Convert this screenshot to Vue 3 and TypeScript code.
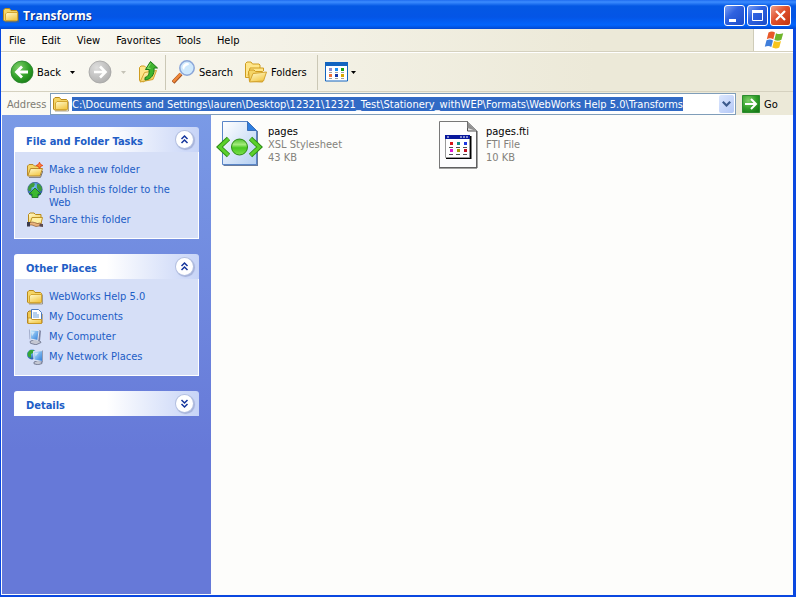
<script setup lang="ts">
import { ref } from 'vue'

interface TaskLink {
  label: string
  icon: string
}

interface FileEntry {
  name: string
  type: string
  size: string
  icon: string
}

const title = 'Transforms'
const menus: string[] = ['File', 'Edit', 'View', 'Favorites', 'Tools', 'Help']
const address = ref(
  'C:\\Documents and Settings\\lauren\\Desktop\\12321\\12321_Test\\Stationery_withWEP\\Formats\\WebWorks Help 5.0\\Transforms',
)

const panels = ref<{ title: string; open: boolean; links: TaskLink[] }[]>([
  {
    title: 'File and Folder Tasks',
    open: true,
    links: [
      { label: 'Make a new folder', icon: 'new-folder' },
      { label: 'Publish this folder to the Web', icon: 'publish' },
      { label: 'Share this folder', icon: 'share' },
    ],
  },
  {
    title: 'Other Places',
    open: true,
    links: [
      { label: 'WebWorks Help 5.0', icon: 'folder' },
      { label: 'My Documents', icon: 'documents' },
      { label: 'My Computer', icon: 'computer' },
      { label: 'My Network Places', icon: 'network' },
    ],
  },
  { title: 'Details', open: false, links: [] },
])

const files: FileEntry[] = [
  { name: 'pages', type: 'XSL Stylesheet', size: '43 KB', icon: 'xsl' },
  { name: 'pages.fti', type: 'FTI File', size: '10 KB', icon: 'fti' },
]
</script>

<template>
  <svg class="sprite" aria-hidden="true">
    <defs>
      <linearGradient id="gold" x1="0" y1="0" x2="0.6" y2="1">
        <stop offset="0" stop-color="#fffbd0" />
        <stop offset="1" stop-color="#f3c94b" />
      </linearGradient>
      <linearGradient id="page" x1="0" y1="0" x2="1" y2="1">
        <stop offset="0" stop-color="#ffffff" />
        <stop offset="1" stop-color="#b4cff2" />
      </linearGradient>
      <radialGradient id="green" cx="0.35" cy="0.3" r="0.8">
        <stop offset="0" stop-color="#7fd06a" />
        <stop offset="0.6" stop-color="#2f9e28" />
        <stop offset="1" stop-color="#187a16" />
      </radialGradient>
      <radialGradient id="grey" cx="0.35" cy="0.3" r="0.8">
        <stop offset="0" stop-color="#dcdcdc" />
        <stop offset="1" stop-color="#a4a4a4" />
      </radialGradient>
      <radialGradient id="globe" cx="0.4" cy="0.3" r="0.8">
        <stop offset="0" stop-color="#7ac6f8" />
        <stop offset="1" stop-color="#164a9c" />
      </radialGradient>
      <linearGradient id="screen" x1="0" y1="0" x2="1" y2="1">
        <stop offset="0" stop-color="#c4ecff" />
        <stop offset="1" stop-color="#2878d8" />
      </linearGradient>
      <linearGradient id="orb" x1="0" y1="0" x2="0" y2="1">
        <stop offset="0" stop-color="#4cc02c" />
        <stop offset="0.35" stop-color="#a4ec7c" />
        <stop offset="0.55" stop-color="#48c820" />
        <stop offset="1" stop-color="#7ce04c" />
      </linearGradient>
    </defs>
    <symbol id="icon-folder" viewBox="0 0 16 16">
      <path d="M2 15h13.500V5.500" fill="none" stroke="#7a6a48" stroke-width="1" opacity=".6" />
      <path d="M.5 13V3L2 1.500h4.500L8 3.500h5.500l1 1V13l-1 1h-12z" fill="#f5d566" stroke="#b98a1a" />
      <path d="M2.500 13.500V7L4 5.500h10.500V13l-.8.5z" fill="url(#gold)" stroke="#d4a630" />
    </symbol>
    <symbol id="icon-new-folder" viewBox="0 0 16 16">
      <path d="M2 15.300h11.500L15.800 9" fill="none" stroke="#4c4032" opacity=".7" />
      <path d="M.5 13.500V4L2 2.500h4L7.500 4H13v3" fill="#f5d566" stroke="#b98a2a" />
      <path d="M.8 14L3.500 6.500h12L13 14z" fill="url(#gold)" stroke="#b98a2a" />
      <path d="M12.500 .2l.9 2.200 2.400 1.100-2.400 1-.9 2.200-1-2.200-2.300-1 2.300-1.100z" fill="#ff8a30" stroke="#e8481c" stroke-width="1" />
    </symbol>
    <symbol id="icon-publish" viewBox="0 0 16 16">
      <circle cx="8" cy="7.500" r="7.200" fill="url(#globe)" stroke="#1b3f78" stroke-width=".6" />
      <path d="M1 6l2-3.500L6 .8l2 1-1 3-2.500 1L4 9 1.500 9zM10 2l3 .5L15 6l-.5 3-2 .5L10 6z" fill="#3f9c3c" />
      <path d="M8 6l6 6h-3v3.500H5V12H2z" fill="#3cb830" stroke="#146c20" stroke-width=".8" />
    </symbol>
    <symbol id="icon-share" viewBox="0 0 16 16">
      <path d="M1.500 12V2.500L3 1h4l1.500 1.500H14V12z" fill="url(#gold)" stroke="#b98a1a" />
      <path d="M3 11.500l2-6h10.500l-1.500 6z" fill="#fff1a4" stroke="#c09428" />
      <path d="M2 11l3-1 2.500.5 3 1 2.500-.5 2 1.500-3 1.500-3 .5-4-1.500H2z" fill="#e8b27c" stroke="#8a5c34" stroke-width=".7" />
      <path d="M0 10h3v4.500H0z" fill="#3a3a4c" />
      <path d="M12.500 12H16v3l-3.500-.5z" fill="#5c4a50" />
    </symbol>
    <symbol id="icon-documents" viewBox="0 0 16 16">
      <path d="M.5 14V3.500L2 2h4l1 2h7l1 1v9z" fill="#f0c850" stroke="#a87a20" />
      <path d="M4.500 11V.5h7l3 3V11z" fill="#fff" stroke="#4b79bd" />
      <path d="M6 4h4M6 6h6M6 8h6" stroke="#6aa0dc" />
      <path d="M1 14.500V9h3l1 1.500h9.500v4z" fill="url(#gold)" stroke="#c89828" />
    </symbol>
    <symbol id="icon-computer" viewBox="0 0 16 16">
      <path d="M3 12.500l4-2 6 1.500 1 1.500-5 2.300-5.500-1.500z" fill="#c4c7d2" stroke="#666d88" stroke-width=".8" />
      <path d="M11 .8l3 1-1 10-4-1z" fill="#7c82a0" />
      <path d="M3 .8l9 .7-1.200 10L3.500 10z" fill="url(#screen)" stroke="#e4e8f2" stroke-width="1" />
      <path d="M2.400 .5l.5 9.800" stroke="#8c98bc" stroke-width=".7" />
      <path d="M4 2.500l4 .3-3 4.500z" fill="#fff" opacity=".5" />
    </symbol>
    <symbol id="icon-network" viewBox="0 0 16 16">
      <circle cx="5" cy="5.500" r="5" fill="url(#globe)" />
      <path d="M.5 4L3 1l4 0-1 3-2 1v4L1 7.500z" fill="#37a834" />
      <path d="M7 13l4-1.500 4 1.500v1.500l-4 1.300-4-1z" fill="#c4c7d2" stroke="#666d88" stroke-width=".8" />
      <path d="M6.500 2.500l9-.9v10.900l-8.500-1.500z" fill="url(#screen)" stroke="#dfe5f2" />
      <path d="M8 4l4-.5-3.500 4z" fill="#fff" opacity=".5" />
      <path d="M15.700 1.500v11l-2 .5" fill="none" stroke="#596184" stroke-width=".7" />
    </symbol>
    <symbol id="icon-xsl" viewBox="0 0 48 50">
      <path d="M8.500 4v43h34.500V12" fill="#35507e" opacity=".75" />
      <path d="M7.500 2.500h25l9 9v34h-34z" fill="url(#page)" stroke="#5a86c8" />
      <path d="M32.500 2.500v9h9z" fill="#2f7fe0" stroke="#3b6fb8" />
      <path d="M13.500 19.500L4.500 28l9 8.500M35.500 19.500l9 8.500-9 8.500" fill="none" stroke="#2c8c14" stroke-width="4.800" />
      <path d="M13.300 19.800L4.700 28l8.600 8.200M35.700 19.800l8.600 8.200-8.600 8.200" fill="none" stroke="#5cd02c" stroke-width="3" />
      <circle cx="24.500" cy="28" r="8" fill="url(#orb)" stroke="#2c8c14" />
    </symbol>
    <symbol id="icon-fti" viewBox="0 0 48 50">
      <path d="M6.500 2.500h28l9 9v37h-37z" fill="#fdfdfd" stroke="#787878" />
      <path d="M44 12v37H6" fill="none" stroke="#484848" />
      <path d="M34.500 2.500v9.500h9" fill="#e4e4e4" stroke="#505050" />
      <path d="M34.500 3l9 9-9-3z" fill="#909090" />
      <path d="M13 39h24.500V17" fill="none" stroke="#000" stroke-width="2" />
      <path d="M12.500 16.500h24v22h-24z" fill="#fff" stroke="#9a9a9a" />
      <path d="M12 16h25v4H12z" fill="#08189c" />
      <path d="M14 18h2M27 18h2M30 18h2M33 18h2" stroke="#fff" />
      <path d="M17 23h3v3h-3z" fill="#d81818" /><path d="M24 23h3v3h-3z" fill="#109088" /><path d="M31 23h3v3h-3z" fill="#2038e0" />
      <path d="M17 30h3v3h-3z" fill="#e018d0" /><path d="M24 30h3v3h-3z" fill="#a8a000" /><path d="M31 30h3v3h-3z" fill="#c01020" />
      <path d="M16 28.500h4M23 28.500h4M30 28.500h4M16 35.500h4M23 35.500h4M30 35.500h4" stroke="#505050" />
    </symbol>
  </svg>

  <div class="window">
    <header class="titlebar">
      <svg class="icon16"><use href="#icon-folder" /></svg>
      <h1>{{ title }}</h1>
      <div class="caption-buttons">
        <button type="button" aria-label="Minimize">
          <svg viewBox="0 0 19 19"><path d="M4 13h7v3H4z" fill="#fff" /></svg>
        </button>
        <button type="button" aria-label="Maximize">
          <svg viewBox="0 0 19 19">
            <path d="M4.500 4.500h10v10h-10z" fill="none" stroke="#fff" /><path d="M4 4h11v3H4z" fill="#fff" />
          </svg>
        </button>
        <button type="button" aria-label="Close" class="close">
          <svg viewBox="0 0 19 19"><path d="M5 5l9 9M14 5l-9 9" stroke="#fff" stroke-width="2.200" /></svg>
        </button>
      </div>
    </header>

    <div class="menubar">
      <nav>
        <button v-for="menu in menus" :key="menu" type="button">{{ menu }}</button>
      </nav>
      <div class="brand">
        <svg viewBox="0 0 20 18" role="img" aria-label="Windows">
          <path d="M4.500 1.500C7 .2 9 .3 11 1.600L9.300 8.300C7.300 7 5 7 2.800 8.200z" fill="#e8592a" />
          <path d="M12 2.200c2.400 1.200 4.700 1 7.200 0l-1.800 6.600c-2.300 1.200-4.700 1.200-7 .1z" fill="#6fb52c" />
          <path d="M2.500 9.300c2.200-1.200 4.500-1.200 6.500.1l-1.700 6.500c-2-1.300-4.200-1.300-6.500-.1z" fill="#3f7edb" />
          <path d="M10 10c2.300 1.100 4.700 1.100 7-.1l-1.700 6.600c-2.300 1.200-4.800 1.200-7 .1z" fill="#f8c41c" />
        </svg>
      </div>
    </div>

    <div class="toolbar">
      <button type="button" class="tool back">
        <svg class="icon24" viewBox="0 0 24 24">
          <circle cx="12" cy="12" r="11" fill="url(#green)" stroke="#26802a" stroke-width=".8" />
          <path d="M18 12H7M12 6.500L6.500 12l5.500 5.500" fill="none" stroke="#fff" stroke-width="2.800" />
        </svg>
        <span>Back</span>
        <svg class="caret" viewBox="0 0 5 3"><path d="M0 0h5L2.500 3z" /></svg>
      </button>
      <button type="button" class="tool forward" aria-label="Forward" disabled>
        <svg class="icon24" viewBox="0 0 24 24">
          <circle cx="12" cy="12" r="11" fill="url(#grey)" stroke="#9a9a9a" stroke-width=".8" />
          <path d="M6 12h11M12 6.500l5.500 5.500-5.500 5.500" fill="none" stroke="#fff" stroke-width="2.600" />
        </svg>
        <svg class="caret" viewBox="0 0 5 3"><path d="M0 0h5L2.500 3z" /></svg>
      </button>
      <button type="button" class="tool" aria-label="Up">
        <svg class="icon24" viewBox="0 0 24 24">
          <path d="M3.500 20.500V7.500L5 6h3.500L10 7.500h6.500V12l-9 10z" fill="#ffe68a" stroke="#cf9c20" />
          <path d="M4 22L8.500 12.500 20.500 10.500 17 19.500z" fill="url(#gold)" stroke="#d4a430" />
          <path d="M9 17.500c3.500-1 4.500-4 4-8H9.500L14.500 1.500 21.500 8H18c.8 6-2.500 11.500-9 12z" fill="#3fb52e" stroke="#1c7a1a" />
          <path d="M14.500 3.500L11.500 8.300h3" fill="none" stroke="#8ee070" />
        </svg>
      </button>
      <span class="divider"></span>
      <button type="button" class="tool">
        <svg class="icon24" viewBox="0 0 24 24">
          <path d="M1 22.500L9 14" stroke="#9c4a1c" stroke-width="4" />
          <path d="M1.200 21.800L8.700 13.800" stroke="#f08838" stroke-width="2.500" />
          <circle cx="15" cy="8" r="7.200" fill="#cfe9fd" stroke="#8ba6d8" stroke-width="1.500" />
          <path d="M10.500 8c0-3 2-5 5-5 1.500 0 2 1 1 2-3 1-4 2-4.500 5z" fill="#fff" />
        </svg>
        <span>Search</span>
      </button>
      <button type="button" class="tool folders">
        <svg class="icon24" viewBox="0 0 24 24">
          <path d="M1.500 17.500v-14L3 2h4l1.500 2H15l1 1v12z" fill="#ffe68a" stroke="#cf9c20" />
          <path d="M4 15.500L6 8h13.500v3" fill="#ffe68a" stroke="#cf9c20" />
          <path d="M5.500 21.500l-1-10 1.500-1.500h4l1.500 1.500h7V22z" fill="#f5d566" stroke="#cf9c20" />
          <path d="M5.500 22L9 13.500 22.500 12l-3 9z" fill="url(#gold)" stroke="#d4a430" />
        </svg>
        <span>Folders</span>
      </button>
      <span class="divider"></span>
      <button type="button" class="tool views" aria-label="Views">
        <svg class="views-icon" viewBox="0 0 23 20">
          <path d="M.5 .5h22v18.500H.5z" fill="#fff" stroke="#1264c0" /><path d="M0 0h23v4H0z" fill="#1264c0" />
          <path d="M4 6h3v3H4z" fill="#8c8cd0" /><path d="M10 6h3v3h-3z" fill="#2090f0" /><path d="M16 6h3v3h-3z" fill="#18a018" />
          <path d="M4 12h3v3H4z" fill="#f07038" /><path d="M10 12h3v3h-3z" fill="#1838a8" /><path d="M16 12h3v3h-3z" fill="#d8a800" />
          <path d="M4 10.500h3M10 10.500h3M16 10.500h3M4 16.500h3M10 16.500h3M16 16.500h3" stroke="#a0a0a0" />
        </svg>
        <svg class="caret" viewBox="0 0 5 3"><path d="M0 0h5L2.500 3z" /></svg>
      </button>
    </div>

    <form class="addressbar" @submit.prevent>
      <label for="address">Address</label>
      <div class="combo">
        <svg class="icon16"><use href="#icon-folder" /></svg>
        <div class="field"><input id="address" v-model="address" type="text" spellcheck="false" /></div>
        <button type="button" class="drop" aria-label="Show addresses">
          <svg viewBox="0 0 9 6"><path d="M.8 .8l3.700 3.700L8.200 .8" fill="none" stroke="#3c5a8c" stroke-width="2.200" /></svg>
        </button>
      </div>
      <button type="submit" class="go">
        <svg viewBox="0 0 18 18">
          <path d="M.5 .5h17v17H.5z" fill="url(#green)" stroke="#2c8c30" />
          <path d="M3 9h11M9 4l5 5-5 5" fill="none" stroke="#fff" stroke-width="2" />
        </svg>
        <span>Go</span>
      </button>
    </form>

    <div class="content">
      <aside>
        <section v-for="panel in panels" :key="panel.title" class="panel">
          <div class="panel-head">
            <h2>{{ panel.title }}</h2>
            <button type="button" :aria-label="panel.title" :aria-expanded="panel.open" @click="panel.open = !panel.open">
              <svg viewBox="0 0 17 17" :class="{ closed: !panel.open }">
                <path d="M5.500 8L8.500 5l3 3M5.500 12l3-3 3 3" fill="none" stroke="#15359c" stroke-width="1.500" />
              </svg>
            </button>
          </div>
          <ul v-if="panel.open">
            <li v-for="link in panel.links" :key="link.label">
              <a href="#">
                <svg class="icon16"><use :href="'#icon-' + link.icon" /></svg>
                <span>{{ link.label }}</span>
              </a>
            </li>
          </ul>
        </section>
      </aside>
      <main>
        <a v-for="file in files" :key="file.name" href="#" class="file">
          <svg class="icon48"><use :href="'#icon-' + file.icon" /></svg>
          <span class="meta">
            <span class="name">{{ file.name }}</span>
            <span>{{ file.type }}</span>
            <span>{{ file.size }}</span>
          </span>
        </a>
      </main>
    </div>
  </div>
</template>

<style>
body {
  margin: 0;
}
</style>

<style scoped>
.sprite {
  position: absolute;
  width: 0;
  height: 0;
}

.window {
  display: flex;
  flex-direction: column;
  box-sizing: border-box;
  min-height: 100vh;
  padding: 0 3px 2px 1px;
  background: #0a48e0;
  color: #000;
  font: 11px/13px 'DejaVu Sans Condensed', 'DejaVu Sans', sans-serif;
}

button,
input {
  margin: 0;
  padding: 0;
  border: 0;
  background: none;
  color: inherit;
  font: inherit;
}

a {
  color: inherit;
  text-decoration: none;
}

svg {
  display: block;
  flex: none;
}

.icon16 {
  width: 16px;
  height: 16px;
}

.icon24 {
  width: 24px;
  height: 24px;
}

.icon48 {
  width: 48px;
  height: 50px;
}

.titlebar {
  display: flex;
  align-items: center;
  height: 29px;
  margin: 0 -3px 0 -1px;
  padding: 0 5px 0 3px;
  box-sizing: border-box;
  gap: 4px;
  background: linear-gradient(#1f6cf0 0, #3c8cff 2px, #0458e4 6px, #0455e6 17px, #0264fc 25px, #0248d0 29px);
}

h1 {
  flex: 1;
  margin: 3px 0 0;
  color: #fff;
  font: bold 12px/16px 'Open Sans', sans-serif;
  text-shadow: 1px 1px 0 #0a2a80;
}

.caption-buttons {
  display: flex;
  gap: 2px;
  padding-top: 2px;
}

.caption-buttons button {
  box-sizing: border-box;
  width: 21px;
  height: 21px;
  border: 1px solid #fff;
  border-radius: 3px;
  background: linear-gradient(135deg, #7ba0f4, #2f62e0 40%, #1c4cc8);
}

.caption-buttons .close {
  background: linear-gradient(135deg, #f0a088, #e0502c 45%, #c03410);
}

.menubar {
  display: flex;
  height: 22px;
  background: linear-gradient(90deg, #fbfaf4, #ece9d8 75%);
  border-bottom: 1px solid #d5d1bf;
}

.menubar nav {
  display: flex;
  flex: 1;
  gap: 2px;
  padding-left: 1px;
}

.menubar nav button {
  padding: 0 7px;
}

.brand {
  display: flex;
  align-items: center;
  justify-content: center;
  width: 39px;
  border-left: 1px solid #cfccb9;
  background: #fff;
}

.brand svg {
  width: 20px;
  height: 18px;
}

.toolbar {
  display: flex;
  align-items: center;
  height: 38px;
  border-top: 1px solid #fff;
  border-bottom: 1px solid #d5d1bf;
  padding-left: 9px;
  background: linear-gradient(90deg, #fbfaf4, #ece9d8 75%);
}

.tool {
  display: flex;
  align-items: center;
  gap: 3px;
}

.back .caret {
  margin-left: 6px;
}

.forward {
  gap: 9px;
  margin: 0 10px 0 13px;
  opacity: 0.9;
}

.forward .caret {
  fill: #c0beb2;
}

.folders {
  margin-left: 11px;
}

.caret {
  width: 5px;
  height: 3px;
}

.divider {
  width: 1px;
  height: 35px;
  margin: 0 6px 0 5px;
  background: #cbc8b6;
}

.folders + .divider {
  margin: 0 7px 0 10px;
}

.views-icon {
  width: 23px;
  height: 20px;
}

.addressbar {
  display: flex;
  align-items: center;
  height: 22px;
  padding: 1px 0 0 6px;
  background: linear-gradient(90deg, #fbfaf4, #ece9d8 75%);
}

.addressbar label {
  width: 43px;
  color: #7f7c73;
}

.combo {
  display: flex;
  flex: 1;
  align-items: center;
  min-width: 0;
  box-sizing: border-box;
  height: 22px;
  padding: 0 1px 0 2px;
  gap: 3px;
  border: 1px solid #7f9db9;
  background: #fff;
}

.field {
  display: flex;
  flex: 1;
  min-width: 0;
}

.field input {
  max-width: 100%;
  height: 14px;
  field-sizing: content;
  background: #316ac5;
  color: #fff;
  outline: 0;
}

.drop {
  display: flex;
  align-items: center;
  justify-content: center;
  width: 15px;
  height: 18px;
  border-radius: 2px;
  background: linear-gradient(135deg, #dce7fe, #b4c8f6);
}

.drop svg {
  width: 9px;
  height: 6px;
}

.go {
  display: flex;
  align-items: center;
  gap: 4px;
  width: 51px;
  margin-left: 6px;
}

.go svg {
  width: 18px;
  height: 18px;
}

.content {
  display: flex;
  flex: 1;
  padding: 0 0 1px 1px;
  background: #fdfdfb;
}

aside {
  display: flex;
  flex-direction: column;
  flex: none;
  gap: 15px;
  box-sizing: border-box;
  width: 209px;
  padding: 12px 12px 20px;
  background: linear-gradient(#7a9ae6, #6679d8 70%);
  color: #215dc6;
}

.panel-head {
  display: flex;
  align-items: center;
  justify-content: space-between;
  height: 25px;
  padding: 0 6px 0 12px;
  border-radius: 3px 3px 0 0;
  background: linear-gradient(90deg, #fff 50%, #c7d4f7);
}

h2 {
  margin: 3px 0 0;
  font-size: 11px;
  line-height: 13px;
}

.panel-head button {
  width: 17px;
  height: 17px;
  border-radius: 50%;
  background: #fff;
  box-shadow: 0 0 0 1px #b4c0e0, 1px 1px 1px 1px #a4b0d8;
}

.closed {
  transform: rotate(180deg);
}

ul {
  display: flex;
  flex-direction: column;
  gap: 3px;
  margin: 0;
  padding: 10px 12px 9px;
  border: 1px solid #fff;
  border-top: 0;
  background: #d6dff7;
  list-style: none;
}

li {
  min-height: 17px;
}

.panel a {
  display: flex;
  gap: 6px;
}

.panel a span {
  padding-top: 1px;
}

main {
  display: grid;
  flex: 1;
  grid-template-columns: repeat(auto-fill, 218px);
  align-content: start;
  padding: 4px;
}

.file {
  display: flex;
  gap: 5px;
}

.meta {
  display: flex;
  flex-direction: column;
  padding-top: 6px;
  color: #84827c;
}

.name {
  color: #000;
}
</style>
